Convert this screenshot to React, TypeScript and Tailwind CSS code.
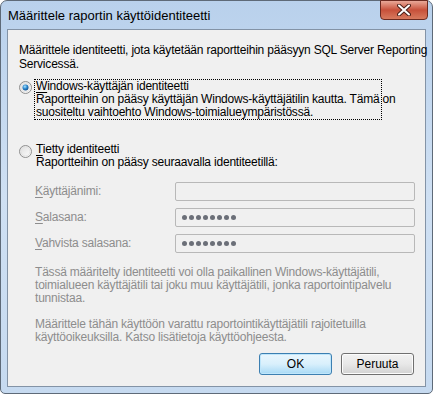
import React from 'react';

const font = { fontFamily: '"Liberation Sans", Arial, sans-serif' };

function Radio({ checked }: { checked?: boolean }) {
  return (
    <svg width="13" height="13" viewBox="0 0 13 13" className="shrink-0">
      <defs>
        <linearGradient id={checked ? 'rg1' : 'rg0'} x1="0" y1="0" x2="1" y2="1">
          <stop offset="0" stopColor="#dcdcdc" />
          <stop offset="1" stopColor="#ffffff" />
        </linearGradient>
        <radialGradient id="dot" cx="0.4" cy="0.35" r="0.7">
          <stop offset="0" stopColor="#aee4fb" />
          <stop offset="0.5" stopColor="#2d8ad2" />
          <stop offset="1" stopColor="#0e4a86" />
        </radialGradient>
      </defs>
      <circle cx="6.5" cy="6.5" r="6" fill={`url(#${checked ? 'rg1' : 'rg0'})`} stroke="#8f8f8f" />
      <circle cx="6.5" cy="6.5" r="4.5" fill="none" stroke="#e3e3e3" />
      {checked && <circle cx="6.5" cy="6.5" r="3" fill="url(#dot)" />}
    </svg>
  );
}

function Dots() {
  return (
    <div className="flex gap-[2px] pl-[6px]">
      {[0, 1, 2, 3, 4, 5, 6, 7].map((i) => (
        <span key={i} className="w-[5px] h-[5px] rounded-full bg-[#6b6f78]" />
      ))}
    </div>
  );
}

function Field({ label, accel, secret }: { label: string; accel: string; secret?: boolean }) {
  return (
    <div className="flex items-center h-[19px]">
      <span className="w-[140px] text-[#8d8d8d]">
        <span className="underline underline-offset-2">{accel}</span>
        {label}
      </span>
      <div className="w-[240px] h-[19px] border border-[#b8b8b8] rounded-[2px] bg-[#f0f0f0] flex items-center">
        {secret && <Dots />}
      </div>
    </div>
  );
}

export default function App() {
  return (
    <div
      className="w-[433px] h-[394px] overflow-hidden text-[12px] leading-[13px] text-black whitespace-nowrap tracking-[-0.2px]"
      style={font}
    >
      <div className="w-full h-full rounded-t-[7px] rounded-b-[5px] border border-[#5e6a78] bg-gradient-to-b from-[#b9d1ec] via-[#cfe0f3] to-[#c6daf0] flex flex-col">
        <div className="relative h-[28px] flex items-center pl-[7px] pt-[1px]">
          <span className="text-[13px] tracking-normal">Määrittele raportin käyttöidentiteetti</span>
          <div className="absolute right-[4px] top-[-1px] w-[48px] h-[20px] rounded-b-[4px] border border-[#6b2a20] bg-gradient-to-b from-[#e8a898] via-[#c7503a] to-[#d77a5e] flex items-center justify-center">
            <svg width="14" height="12" viewBox="0 0 14 12">
              <path d="M2 1.5 L12 10.5 M12 1.5 L2 10.5" stroke="#4a2018" strokeWidth="4" strokeLinecap="round" />
              <path d="M2 1.5 L12 10.5 M12 1.5 L2 10.5" stroke="#ffffff" strokeWidth="2" strokeLinecap="round" />
            </svg>
          </div>
        </div>
        <div className="mx-[6px] mb-[6px] flex-1 border border-[#8393a6] bg-[#f0f0f0] pl-[11px] pr-[10px] flex flex-col">
          <p className="mt-[13px] leading-[14px]">
            Määrittele identiteetti, jota käytetään raportteihin pääsyyn SQL Server Reporting
            <br />
            Servicessä.
          </p>
          <div className="mt-[8px] flex items-start">
            <div className="mt-[2px]">
              <Radio checked />
            </div>
            <div className="ml-[2px] border border-dotted border-black px-[1px] w-[348px]">
              <div>
                <span className="underline underline-offset-2">W</span>indows-käyttäjän identiteetti
              </div>
              <div>Raportteihin on pääsy käyttäjän Windows-käyttäjätilin kautta. Tämä on</div>
              <div>suositeltu vaihtoehto Windows-toimialueympäristössä.</div>
            </div>
          </div>
          <div className="mt-[23px] flex items-start">
            <div className="mt-[2px]">
              <Radio />
            </div>
            <div className="ml-[3px] px-[1px]">
              <div>
                <span className="underline underline-offset-2">T</span>ietty identiteetti
              </div>
              <div>Raportteihin on pääsy seuraavalla identiteetillä:</div>
            </div>
          </div>
          <div className="mt-[13px] pl-[16px] flex flex-col">
            <Field accel="K" label="äyttäjänimi:" />
            <div className="mt-[7px]">
              <Field accel="S" label="alasana:" secret />
            </div>
            <div className="mt-[7px]">
              <Field accel="V" label="ahvista salasana:" secret />
            </div>
          </div>
          <p className="mt-[13px] pl-[16px] text-[#8d8d8d]">
            Tässä määritelty identiteetti voi olla paikallinen Windows-käyttäjätili,
            <br />
            toimialueen käyttäjätili tai joku muu käyttäjätili, jonka raportointipalvelu
            <br />
            tunnistaa.
          </p>
          <p className="mt-[13px] pl-[16px] text-[#8d8d8d]">
            Määrittele tähän käyttöön varattu raportointikäyttäjätili rajoitetuilla
            <br />
            käyttöoikeuksilla. Katso lisätietoja käyttöohjeesta.
          </p>
          <div className="mt-auto mb-[11px] flex justify-end gap-[9px] pr-[1px]">
            <button className="w-[73px] h-[22px] rounded-[3px] border border-[#3c7fb1] bg-gradient-to-b from-[#eaf6fd] via-[#d9f0fc] to-[#a7d9f5] shadow-[inset_0_0_0_1px_#bfe6fb] tracking-normal">
              OK
            </button>
            <button className="w-[73px] h-[22px] rounded-[3px] border border-[#707070] bg-gradient-to-b from-[#f2f2f2] via-[#e8e8e8] to-[#d2d2d2] shadow-[inset_0_0_0_1px_#fcfcfc] tracking-normal">
              Peruuta
            </button>
          </div>
        </div>
      </div>
    </div>
  );
}
